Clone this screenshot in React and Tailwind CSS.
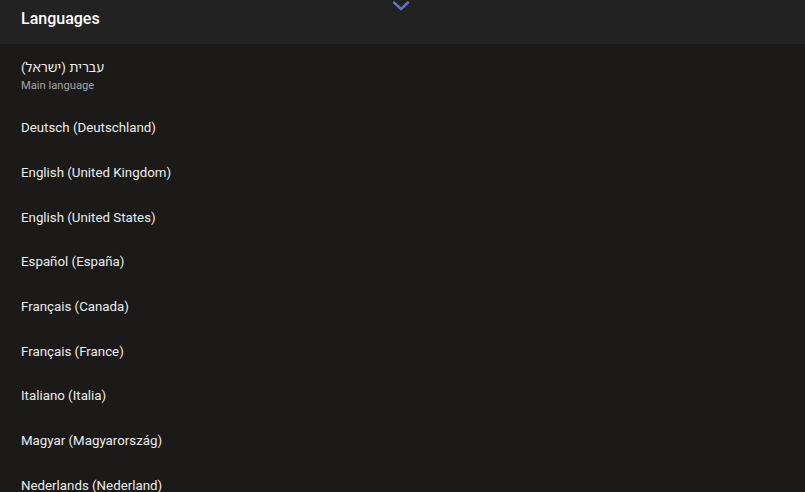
const languages = [
  "Deutsch (Deutschland)",
  "English (United Kingdom)",
  "English (United States)",
  "Español (España)",
  "Français (Canada)",
  "Français (France)",
  "Italiano (Italia)",
  "Magyar (Magyarország)",
  "Nederlands (Nederland)",
];

const App = () => {
  return (
    <div
      className="w-[805px] h-[492px] overflow-hidden bg-[#1b1a19] text-[#e6e6e6]"
      style={{ fontFamily: "Roboto, 'Noto Sans Hebrew', 'DejaVu Sans', sans-serif" }}
    >
      {/* Header */}
      <div className="relative h-[44px] bg-[#222222] flex items-center pb-[7px] px-[21px]">
        <h1 className="text-[16px] font-medium text-white">Languages</h1>
        <svg
          className="absolute left-[392px] top-[1px]"
          width="18"
          height="10"
          viewBox="0 0 18 10"
          fill="none"
        >
          <path d="M2 1.5 L9 8 L16 1.5" stroke="#6a6ec6" strokeWidth="2.4" strokeLinecap="round" strokeLinejoin="round" />
        </svg>
      </div>

      {/* List */}
      <div className="flex flex-col">
        <div className="h-[62px] flex flex-col justify-center pt-[3px] px-[21px]">
          <span className="text-[13.3px] leading-[18px] text-[#ececec]">עברית (ישראל)</span>
          <span className="text-[11.2px] leading-[17px] text-[#a3a3a3]">Main language</span>
        </div>
        {languages.map((lang) => (
          <div key={lang} className="h-[44.67px] shrink-0 flex items-center px-[21px]">
            <span className="text-[13.3px] text-[#ececec]">{lang}</span>
          </div>
        ))}
      </div>
    </div>
  );
};

export default App;
